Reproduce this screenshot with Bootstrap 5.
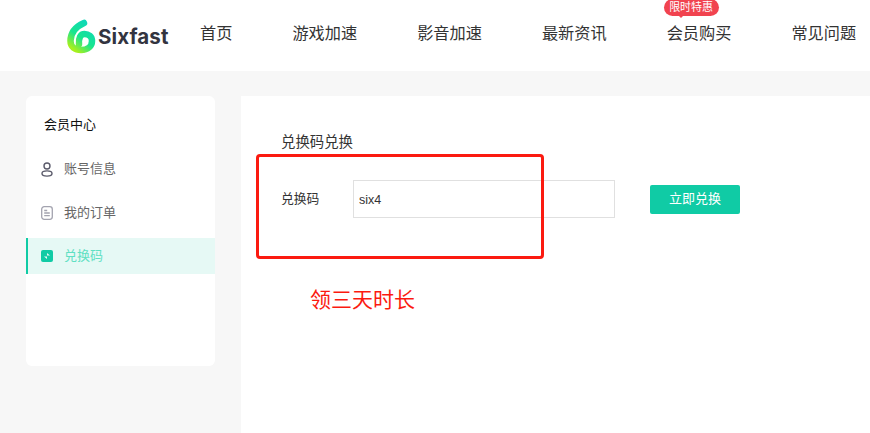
<!DOCTYPE html>
<html lang="zh-CN">
  <head>
    <meta charset="UTF-8" />
    <meta name="viewport" content="width=device-width, initial-scale=1.0" />
    <title>Sixfast</title>
    <link
      href="https://cdn.jsdelivr.net/npm/bootstrap@5.3.0/dist/css/bootstrap.min.css"
      rel="stylesheet"
    />
    <script src="https://cdn.jsdelivr.net/npm/bootstrap@5.3.0/dist/js/bootstrap.bundle.min.js"></script>
    <style>
      body {
        font-family: "Liberation Sans", "Noto Sans CJK SC", sans-serif;
        background: #f7f7f7;
        height: 433px;
        overflow: hidden;
        color: #333;
      }
      .site-head {
        height: 71px;
        background: #fff;
        padding-left: 66px;
      }
      .logo-box {
        width: 134px;
        gap: 1px;
      }
      .logo-word {
        font-family: Inter, sans-serif;
        font-weight: 700;
        font-size: 20.5px;
        letter-spacing: 0.1px;
        color: #33343f;
        line-height: 1;
        margin-top: 3px;
      }
      .head-links {
        gap: 60px;
        white-space: nowrap;
        margin-top: -4px;
      }
      .head-links a {
        font-size: 16.2px;
        color: #333;
        text-decoration: none;
        position: relative;
      }
      .hot-tag {
        position: absolute;
        left: -3px;
        top: -22px;
        width: 55px;
        height: 17px;
        line-height: 17px;
        border-radius: 9px;
        background: #f1434f;
        color: #fff;
        font-size: 11px;
        text-align: center;
      }
      .hot-tag::after {
        content: "";
        position: absolute;
        left: 14px;
        top: 16px;
        border: 3px solid transparent;
        border-top-color: #f1434f;
      }
      .page-body {
        padding: 25px 0 0 26px;
        gap: 26px;
        position: relative;
      }
      .side-panel {
        width: 189px;
        height: 270px;
        background: #fff;
        border-radius: 6px;
        flex: none;
      }
      .side-title {
        font-size: 13px;
        color: #111;
        padding: 20px 0 0 18px;
        height: 55px;
        line-height: 18px;
      }
      .side-item {
        height: 36px;
        margin-bottom: 7.5px;
        padding-left: 15px;
        gap: 11px;
        font-size: 13px;
        color: #666;
      }
      .side-item.on {
        background: #e6f9f5;
        border-left: 2px solid #10cba5;
        padding-left: 13px;
        color: #5fe0c3;
      }
      .main-panel {
        flex: 1;
        height: 340px;
        background: #fff;
        padding: 37px 0 0 40px;
      }
      .main-title {
        font-size: 14.4px;
        color: #333;
        line-height: 18px;
        margin-bottom: 29px;
      }
      .code-label {
        width: 72px;
        font-size: 12.8px;
      }
      .code-input {
        width: 262px;
        height: 38px;
        border: 1px solid #e0e0e0;
        border-radius: 0;
        padding: 2px 5px 0;
        font-size: 12.5px;
        color: #333;
        flex: none;
      }
      .code-btn {
        width: 90px;
        height: 29px;
        margin-left: 35px;
        padding: 0;
        border: 0;
        border-radius: 2px;
        background: #10cba5;
        color: #fff;
        font-size: 13px;
      }
      .mark-box {
        position: absolute;
        left: 256px;
        top: 83px;
        width: 288px;
        height: 105px;
        border: 3px solid #fb1a10;
        border-radius: 4px;
      }
      .mark-note {
        position: absolute;
        left: 310px;
        top: 215px;
        font-size: 21px;
        line-height: 28px;
        color: #fb1a10;
      }
    </style>
  </head>
  <body>
    <header class="site-head d-flex align-items-center">
      <div class="logo-box d-flex align-items-center">
        <svg width="31" height="36" viewBox="0 0 31 36">
          <defs>
            <linearGradient id="logoGrad" x1="0.8" y1="0" x2="0.2" y2="1">
              <stop offset="0" stop-color="#0fd8b8" />
              <stop offset="0.55" stop-color="#18e58f" />
              <stop offset="1" stop-color="#a6f01e" />
            </linearGradient>
          </defs>
          <path
            d="M18 5 C9 9 4.5 15 4.5 23 C4.5 29 9 32 15 32 C22 32 26 28 26 23 C26 18.5 22.5 16 18.5 16 C14.5 16 12.5 20 13 26"
            fill="none"
            stroke="url(#logoGrad)"
            stroke-width="6.5"
            stroke-linecap="round"
          />
        </svg>
        <span class="logo-word">Sixfast</span>
      </div>
      <nav class="head-links d-flex">
        <a href="#">首页</a>
        <a href="#">游戏加速</a>
        <a href="#">影音加速</a>
        <a href="#">最新资讯</a>
        <a href="#">会员购买<span class="hot-tag">限时特惠</span></a>
        <a href="#">常见问题</a>
      </nav>
    </header>

    <div class="page-body d-flex">
      <aside class="side-panel">
        <div class="side-title">会员中心</div>
        <div class="side-item d-flex align-items-center">
          <svg width="12" height="15" viewBox="0 0 12 15" fill="none" stroke="#5b5b6b" stroke-width="1.4">
            <circle cx="6" cy="4" r="3" />
            <ellipse cx="6" cy="11.5" rx="5" ry="2.6" />
          </svg>
          <span>账号信息</span>
        </div>
        <div class="side-item d-flex align-items-center">
          <svg width="12" height="14" viewBox="0 0 12 14" fill="none" stroke="#a3a3af" stroke-width="1.3">
            <rect x="0.7" y="0.7" width="10.6" height="12.6" rx="2.5" />
            <path d="M3.2 4.5h3M3.2 7h5.6M3.2 9.6h5.6" />
          </svg>
          <span>我的订单</span>
        </div>
        <div class="side-item on d-flex align-items-center">
          <svg width="12" height="12" viewBox="0 0 12 12">
            <rect width="12" height="12" rx="2" fill="#10cba5" />
            <path d="M3 5.6h3V3l3 2.6zM9 6.4H6V9L3 6.4z" fill="#e6f9f5" />
          </svg>
          <span>兑换码</span>
        </div>
      </aside>

      <main class="main-panel">
        <div class="main-title">兑换码兑换</div>
        <div class="d-flex align-items-center">
          <label class="code-label">兑换码</label>
          <input class="form-control code-input" type="text" value="six4" />
          <button class="btn code-btn" type="button">立即兑换</button>
        </div>
      </main>

      <div class="mark-box"></div>
      <div class="mark-note">领三天时长</div>
    </div>
  </body>
</html>
